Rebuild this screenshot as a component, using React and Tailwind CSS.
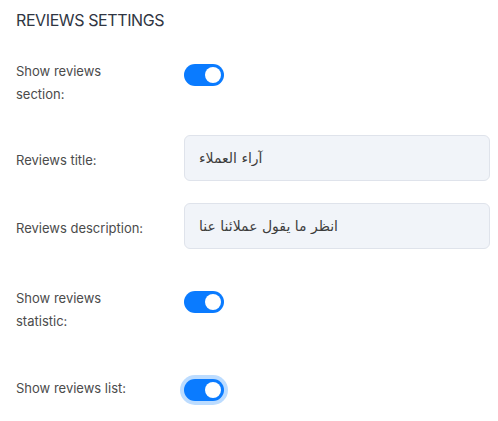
import React from "react";

const Toggle = ({ focused }) => (
  <div
    className={`relative w-10 h-[22px] rounded-full bg-[#0a7bff] ${
      focused ? "ring-4 ring-[#bcdcff]" : ""
    }`}
  >
    <span className="absolute right-[3px] top-[3px] w-4 h-4 rounded-full bg-white" />
  </div>
);

const TextField = ({ value }) => (
  <input
    readOnly
    value={value}
    className="w-full h-[46px] rounded-md border border-[#dfe3eb] bg-[#f1f4f9] pl-[14px] text-[14px] text-[#3d3d3d] outline-none"
    style={{ fontFamily: '"DejaVu Sans", sans-serif' }}
  />
);

const Label = ({ children, className = "" }) => (
  <div className={`w-[168px] shrink-0 pr-9 text-[13px] leading-[23px] text-[#4b4b4b] ${className}`}>
    {children}
  </div>
);

export default function App() {
  return (
    <div className="w-[498px] h-[421px] bg-white pl-4 pr-2 font-['Inter',sans-serif]">
      <h2 className="pt-2 text-[16px] leading-6 text-[#2f3542] tracking-tight">REVIEWS SETTINGS</h2>

      <div className="mt-[28px] flex items-start">
        <Label>Show reviews section:</Label>
        <div className="pt-1">
          <Toggle />
        </div>
      </div>

      <div className="mt-[29px] flex items-start">
        <Label className="pt-[14px]">Reviews title:</Label>
        <TextField value="آراء العملاء" />
      </div>

      <div className="mt-[22px] flex items-start">
        <Label className="pt-[14px]">Reviews description:</Label>
        <TextField value="انظر ما يقول عملائنا عنا" />
      </div>

      <div className="mt-[38px] flex items-start">
        <Label>Show reviews statistic:</Label>
        <div className="pt-1">
          <Toggle />
        </div>
      </div>

      <div className="mt-[44px] flex items-start">
        <Label>Show reviews list:</Label>
        <div className="pt-[2px]">
          <Toggle focused />
        </div>
      </div>
    </div>
  );
}
